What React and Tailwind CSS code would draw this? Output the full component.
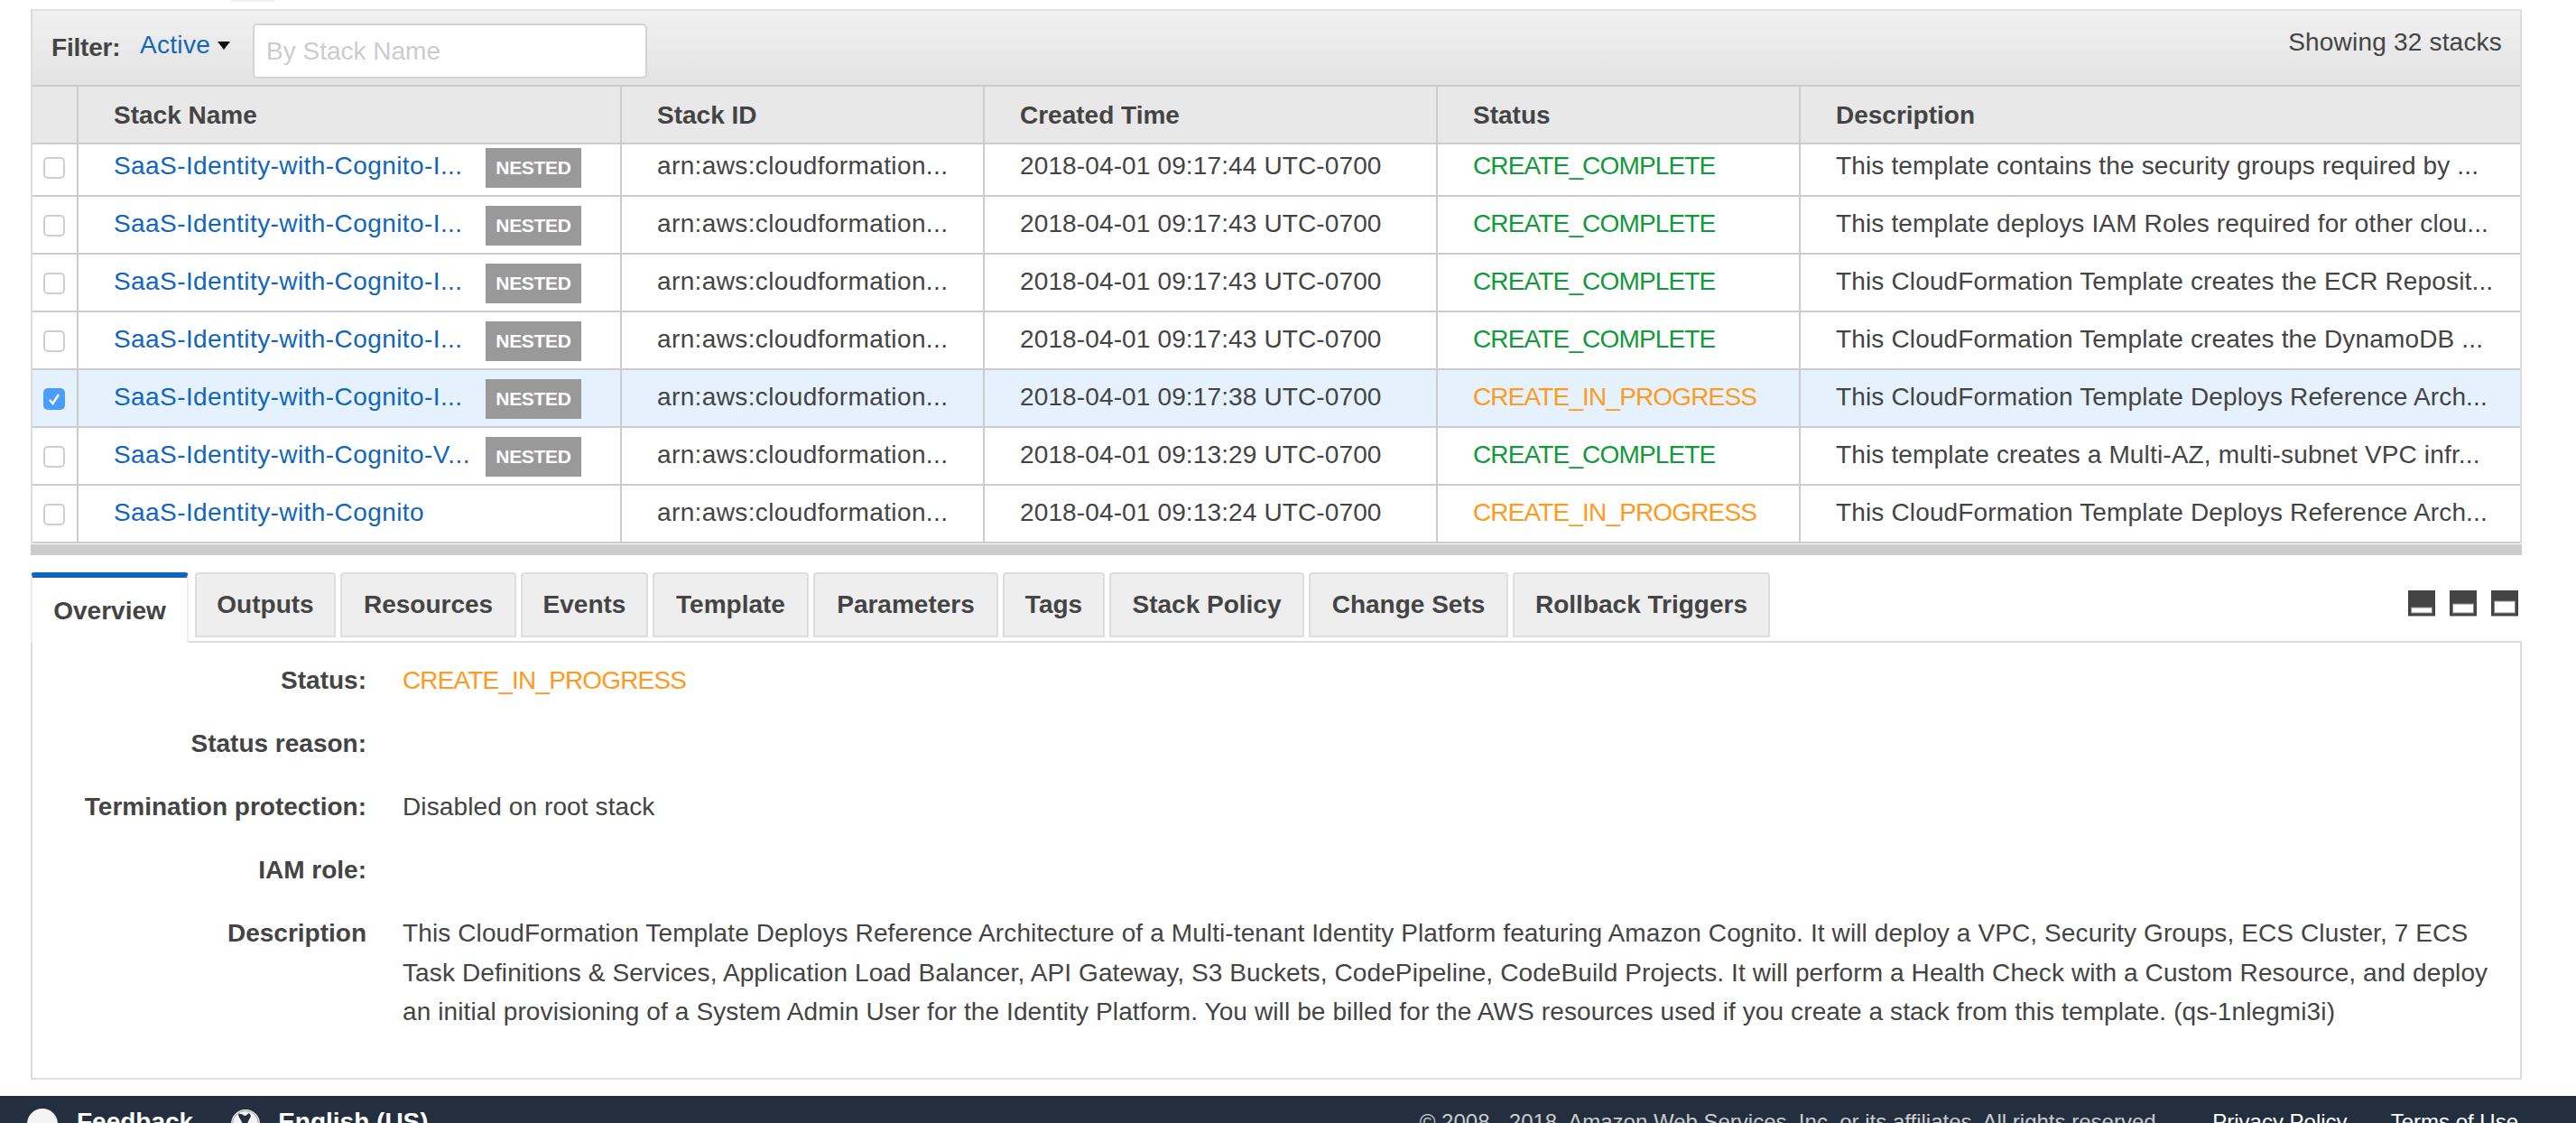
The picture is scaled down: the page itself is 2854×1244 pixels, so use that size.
import React from 'react';

const rows = [
    { name: 'SaaS-Identity-with-Cognito-I...', nested: true, time: '2018-04-01 09:17:44 UTC-0700', status: 'CREATE_COMPLETE', desc: 'This template contains the security groups required by ...' },
    { name: 'SaaS-Identity-with-Cognito-I...', nested: true, time: '2018-04-01 09:17:43 UTC-0700', status: 'CREATE_COMPLETE', desc: 'This template deploys IAM Roles required for other clou...' },
    { name: 'SaaS-Identity-with-Cognito-I...', nested: true, time: '2018-04-01 09:17:43 UTC-0700', status: 'CREATE_COMPLETE', desc: 'This CloudFormation Template creates the ECR Reposit...' },
    { name: 'SaaS-Identity-with-Cognito-I...', nested: true, time: '2018-04-01 09:17:43 UTC-0700', status: 'CREATE_COMPLETE', desc: 'This CloudFormation Template creates the DynamoDB ...' },
    { name: 'SaaS-Identity-with-Cognito-I...', nested: true, time: '2018-04-01 09:17:38 UTC-0700', status: 'CREATE_IN_PROGRESS', desc: 'This CloudFormation Template Deploys Reference Arch...', selected: true },
    { name: 'SaaS-Identity-with-Cognito-V...', nested: true, time: '2018-04-01 09:13:29 UTC-0700', status: 'CREATE_COMPLETE', desc: 'This template creates a Multi-AZ, multi-subnet VPC infr...' },
    { name: 'SaaS-Identity-with-Cognito', nested: false, time: '2018-04-01 09:13:24 UTC-0700', status: 'CREATE_IN_PROGRESS', desc: 'This CloudFormation Template Deploys Reference Arch...' },
];

const tabs = [
    { label: 'Outputs', w: 'w-[156px]' },
    { label: 'Resources', w: 'w-[195px]' },
    { label: 'Events', w: 'w-[141px]' },
    { label: 'Template', w: 'w-[173px]' },
    { label: 'Parameters', w: 'w-[205px]' },
    { label: 'Tags', w: 'w-[113px]' },
    { label: 'Stack Policy', w: 'w-[216px]' },
    { label: 'Change Sets', w: 'w-[221px]' },
    { label: 'Rollback Triggers', w: 'w-[285px]' },
];

const Checkbox = ({ checked }) =>
    checked ? (
        <div className="w-[24px] h-[24px] rounded-[5px] bg-[#4a9dfb] flex items-center justify-center">
            <svg width="16" height="16" viewBox="0 0 16 16">
                <path d="M3 9l3.5 4L13 3" fill="none" stroke="#fff" strokeWidth="2.4" />
            </svg>
        </div>
    ) : (
        <div className="w-[24px] h-[24px] rounded-[5px] bg-white border-2 border-[#cfcfcf]" />
    );

const PaneIcon = ({ top }) => (
    <svg width="30" height="29" viewBox="0 0 30 29">
        <rect x="0" y="0" width="30" height="28" fill="#444444" />
        <rect x="0" y="28" width="30" height="1" fill="#aaaaaa" />
        <rect x="3.5" y={top} width="23" height={25 - top} fill="#ffffff" stroke="#8a8a8a" strokeWidth="1" />
    </svg>
);

const Row = ({ row, first }) => {
    // the first row is scrolled a little under the header, so its content sits higher
    const box = first ? 'mb-[4px]' : 'mt-[2px]';
    const text = first ? 'mb-[8px]' : 'mb-[2px]';
    return (
        <div
            className={`flex border-b-2 border-[#ccc] ${first ? 'h-[58px]' : 'h-[64px]'} ${
                row.selected ? 'bg-[#e5f2fd]' : 'bg-white'
            }`}
        >
            <div className="w-[51px] shrink-0 flex items-center pl-[12px] border-r-2 border-[#ccc]">
                <div className={box}>
                    <Checkbox checked={row.selected} />
                </div>
            </div>
            <div className="w-[602px] shrink-0 flex items-center justify-between pl-[39px] pr-[43px] border-r-2 border-[#ccc]">
                <a className={`text-[#16b] tracking-[0.42px] ${text}`}>{row.name}</a>
                {row.nested && (
                    <span className={`w-[106px] h-[44px] shrink-0 flex items-center justify-center bg-[#999] text-white text-[21px] tracking-[-0.3px] font-bold ${box}`}>
                        NESTED
                    </span>
                )}
            </div>
            <div className="w-[402px] shrink-0 flex items-center pl-[39px] border-r-2 border-[#ccc]">
                <span className={`tracking-[0.38px] ${text}`}>arn:aws:cloudformation...</span>
            </div>
            <div className="w-[502px] shrink-0 flex items-center pl-[39px] border-r-2 border-[#ccc]">
                <span className={`tracking-[0.13px] ${text}`}>{row.time}</span>
            </div>
            <div className="w-[402px] shrink-0 flex items-center pl-[39px] border-r-2 border-[#ccc]">
                <span className={`tracking-[-0.85px] ${text} ${row.status === 'CREATE_COMPLETE' ? 'text-[#12993a]' : 'text-[#ff9a1f]'}`}>
                    {row.status}
                </span>
            </div>
            <div className="flex-1 flex items-center pl-[39px]">
                <span className={`tracking-[0.15px] whitespace-nowrap ${text}`}>{row.desc}</span>
            </div>
        </div>
    );
};

const Detail = ({ label, children, h = 'h-[70px]' }) => (
    <div className={`flex ${h}`}>
        <div className="w-[370px] shrink-0 text-right font-bold mt-[2px]">{label}</div>
        <div className="ml-[40px] w-[2330px] leading-[43.5px] tracking-[0.11px]">{children}</div>
    </div>
);

export default function App() {
    return (
        <div className="w-[2854px] h-[1244px] overflow-hidden bg-white flex flex-col font-['Liberation_Sans',Arial,sans-serif] text-[28px] leading-[40px] text-[#444]">
            <div className="h-[10px] shrink-0 pl-[255px]">
                <div className="w-[50px] h-[2px] bg-[#f2f2f2] rounded-b" />
            </div>
            <div className="pl-[34px] pr-[60px] shrink-0">
                <div className="border-x-2 border-[#ddd]">
                    {/* filter bar */}
                    <div className="h-[86px] flex items-center border-t-2 border-t-[#e0e0e0] border-b-2 border-b-[#ccc] bg-gradient-to-b from-[#f0f0f0] to-[#e3e3e3] pl-[21px] pr-[20px]">
                        <span className="font-bold w-[98px] tracking-[-0.2px]">Filter:</span>
                        <a className="text-[#16b] mb-[6px] tracking-[0.3px]">Active</a>
                        <svg className="ml-[8px] mb-[6px]" width="14" height="9" viewBox="0 0 14 9">
                            <path d="M0 0h14L7 9z" fill="#111" />
                        </svg>
                        <div className="ml-[25px] mt-[7px] w-[437px] h-[61px] rounded-[5px] border-2 border-[#d4d4d4] bg-white pl-[13px] flex items-center text-[#ccc]">
                            By Stack Name
                        </div>
                        <span className="ml-auto mb-[12px] tracking-[0.2px]">Showing 32 stacks</span>
                    </div>
                    {/* table head */}
                    <div className="flex h-[64px] bg-[#e8e8e8] border-b-2 border-[#ccc] font-bold">
                        <div className="w-[51px] shrink-0 border-r-2 border-[#ccc]" />
                        <div className="w-[602px] shrink-0 flex items-center pl-[39px] pt-[2px] border-r-2 border-[#ccc]">Stack Name</div>
                        <div className="w-[402px] shrink-0 flex items-center pl-[39px] pt-[2px] border-r-2 border-[#ccc]">Stack ID</div>
                        <div className="w-[502px] shrink-0 flex items-center pl-[39px] pt-[2px] border-r-2 border-[#ccc]">Created Time</div>
                        <div className="w-[402px] shrink-0 flex items-center pl-[39px] pt-[2px] border-r-2 border-[#ccc]">Status</div>
                        <div className="flex-1 flex items-center pl-[39px] pt-[2px]">Description</div>
                    </div>
                    {rows.map((row, index) => (
                        <Row key={index} row={row} first={index === 0} />
                    ))}
                </div>
                <div className="h-[12px] mt-[1px] bg-[#ccc]" />

                {/* tabs */}
                <div className="mt-[19px] h-[78px] flex border-b-2 border-[#ddd] items-start">
                    <div className="w-[175px] h-[78px] shrink-0 border-t-[6px] border-t-[#16b] rounded-t-[4px] border-x-2 border-x-[#eee] bg-white font-bold flex items-center justify-center pt-[2px] relative z-10">
                        Overview
                    </div>
                    <div className="flex gap-[5px] ml-[7px]">
                        {tabs.map((tab) => (
                            <div
                                key={tab.label}
                                className={`${tab.w} h-[72px] rounded-t-[4px] border-2 border-[#ddd] bg-[#eee] font-bold flex items-center justify-center`}
                            >
                                {tab.label}
                            </div>
                        ))}
                    </div>
                    <div className="ml-auto mr-[4px] mt-[20px] flex gap-[16px]">
                        <PaneIcon top={19} />
                        <PaneIcon top={15} />
                        <PaneIcon top={12} />
                    </div>
                </div>

                {/* overview */}
                <div className="h-[484px] border-x-2 border-b-2 border-[#ddd] pt-[20px]">
                    <Detail label="Status:">
                        <span className="text-[#ff9a1f] tracking-[-0.85px]">CREATE_IN_PROGRESS</span>
                    </Detail>
                    <Detail label="Status reason:" />
                    <Detail label="Termination protection:">Disabled on root stack</Detail>
                    <Detail label="IAM role:" />
                    <Detail label="Description" h="h-[140px]">
                        This CloudFormation Template Deploys Reference Architecture of a Multi-tenant Identity Platform featuring
                        Amazon Cognito. It will deploy a VPC, Security Groups, ECS Cluster, 7 ECS Task Definitions &amp; Services,
                        Application Load Balancer, API Gateway, S3 Buckets, CodePipeline, CodeBuild Projects. It will perform a
                        Health Check with a Custom Resource, and deploy an initial provisioning of a System Admin User for the
                        Identity Platform. You will be billed for the AWS resources used if you create a stack from this template.
                        (qs-1nlegmi3i)
                    </Detail>
                </div>
            </div>

            {/* footer, cut off by the window */}
            <div className="mt-[18px] h-[30px] shrink-0 overflow-hidden bg-[#232f3e] flex items-start text-white pl-[30px] pr-[64px] pt-[14px]">
                <div className="w-[34px] h-[34px] rounded-full bg-[#f4f4f4] shrink-0" />
                <span className="ml-[21px] font-bold -mt-[5px]">Feedback</span>
                <svg className="ml-[42px] shrink-0" width="32" height="34" viewBox="0 0 32 34">
                    <circle cx="16" cy="17" r="16" fill="#f4f4f4" />
                    <circle cx="16" cy="17" r="14.5" fill="none" stroke="#9aa0a6" strokeWidth="1" />
                    <path d="M8 6c3-1 5 1 7 2 2 0 3-2 5-3l2 3c-1 3-3 5-4 9l-3 3c-2-2-3-5-4-7-1-2-3-4-3-7z" fill="#232f3e" />
                </svg>
                <span className="ml-[20px] font-bold -mt-[5px]">English (US)</span>
                <span className="ml-auto text-[24px] text-[#ccc] -mt-[5px]">© 2008 - 2018, Amazon Web Services, Inc. or its affiliates. All rights reserved.</span>
                <span className="ml-[56px] text-[24px] -mt-[5px]">Privacy Policy</span>
                <span className="ml-[48px] text-[24px] -mt-[5px]">Terms of Use</span>
            </div>
        </div>
    );
}
